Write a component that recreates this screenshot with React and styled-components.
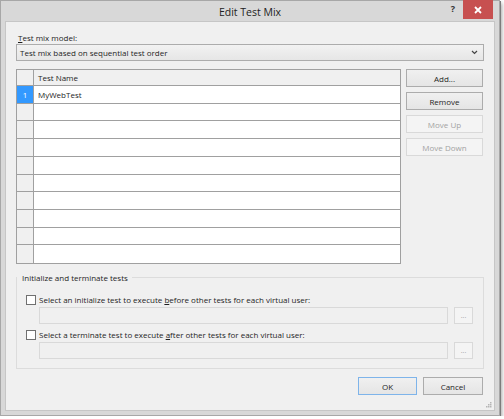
import React from 'react';
import styled, { createGlobalStyle } from 'styled-components';

const GlobalStyle = createGlobalStyle`
  html, body {
    margin: 0;
    padding: 0;
    background: #ffffff;
  }
  body {
    font-family: "Open Sans", "Noto Sans", sans-serif;
    font-size: 8px;
    color: #1e1e1e;
  }
`;

const Window = styled.div`
  width: 500px;
  box-sizing: border-box;
  background: #d8d8d8;
  border: 1px solid #a7a7a7;
  padding: 0 4px 4px 4px;
  box-shadow: 1px 1px 0 #7c7c7c, 2px 3px 4px rgba(0, 0, 0, 0.35);
`;

const TitleBar = styled.div`
  height: 20px;
  display: grid;
  grid-template-columns: 1fr auto 1fr;
  align-items: start;
`;

const Title = styled.div`
  grid-column: 2;
  font-size: 10.5px;
  line-height: 22px;
  color: #222;
`;

const Controls = styled.div`
  grid-column: 3;
  justify-self: end;
  display: flex;
  align-items: flex-start;
  margin-top: -1px;
  margin-right: 2px;
`;

const HelpButton = styled.div`
  width: 16px;
  font-size: 9px;
  font-weight: bold;
  line-height: 18px;
  text-align: center;
  color: #333;
  margin-right: 2px;
`;

const CloseButton = styled.div`
  width: 30px;
  height: 19px;
  background: #c75050;
  display: flex;
  align-items: center;
  justify-content: center;
`;

const Client = styled.div`
  position: relative;
  background: #f0f0f0;
  border: 1px solid #c6c6c6;
  padding: 10px 10px 15px 10px;
`;

const FieldLabel = styled.div`
  line-height: 11px;
  padding-left: 2px;
  margin-bottom: 1px;
`;

const Combo = styled.div`
  height: 17px;
  box-sizing: border-box;
  border: 1px solid #acacac;
  background: linear-gradient(#f2f2f2, #e6e6e6);
  display: flex;
  align-items: center;
  justify-content: space-between;
  padding: 0 5px 0 3px;
`;

const MainRow = styled.div`
  display: flex;
  gap: 5px;
  margin-top: 8px;
`;

const Grid = styled.div`
  width: 385px;
  height: 195px;
  box-sizing: border-box;
  border: 1px solid #a0a0a0;
  display: grid;
  grid-template-columns: 17px 1fr;
  grid-template-rows: 16px repeat(10, 1fr);
  background: #ffffff;
`;

const Cell = styled.div`
  border-right: ${({ $last }) => ($last ? 'none' : '1px solid #a0a0a0')};
  border-bottom: ${({ $bottom }) => ($bottom ? 'none' : '1px solid #a0a0a0')};
  background: ${({ $head, $selected }) =>
    $selected ? '#3399ff' : $head ? '#f0f0f0' : '#ffffff'};
  color: ${({ $selected }) => ($selected ? '#ffffff' : '#1e1e1e')};
  display: flex;
  align-items: center;
  justify-content: ${({ $num }) => ($num ? 'center' : 'flex-start')};
  padding-left: ${({ $num }) => ($num ? '0' : '4px')};
  white-space: nowrap;
  overflow: hidden;
`;

const ButtonColumn = styled.div`
  width: 77px;
  display: flex;
  flex-direction: column;
  gap: 5px;
`;

const Button = styled.div`
  height: 18px;
  box-sizing: border-box;
  width: ${({ $w }) => $w || '77px'};
  border: 1px solid
    ${({ $disabled, $default }) =>
      $disabled ? '#d9d9d9' : $default ? '#7eb4ea' : '#acacac'};
  background: ${({ $disabled }) =>
    $disabled ? '#f4f4f4' : 'linear-gradient(#f0f0f0, #e5e5e5)'};
  color: ${({ $disabled }) => ($disabled ? '#a3a3a3' : '#1e1e1e')};
  display: flex;
  align-items: center;
  justify-content: center;
`;

const Group = styled.fieldset`
  margin: 8px 0 0 0;
  padding: 11px 10px 9px 9px;
  border: 1px solid #dcdcdc;
  min-width: 0;
`;

const Legend = styled.legend`
  padding: 0 4px 0 5px;
  margin-left: -9px;
  line-height: 11px;
`;

const CheckRow = styled.label`
  display: flex;
  align-items: center;
  gap: 3px;
  line-height: 11px;
  margin-top: ${({ $first }) => ($first ? '0' : '5px')};
`;

const Box = styled.span`
  width: 10px;
  height: 10px;
  box-sizing: border-box;
  border: 1px solid #707070;
  background: #ffffff;
  flex: none;
`;

const PickRow = styled.div`
  display: flex;
  gap: 6px;
  padding-left: 13px;
  margin-top: 2px;
`;

const TextField = styled.div`
  width: 409px;
  height: 17px;
  box-sizing: border-box;
  border: 1px solid #d9d9d9;
  background: #f0f0f0;
`;

const DotsButton = styled.div`
  width: 19px;
  height: 17px;
  box-sizing: border-box;
  border: 1px solid #d9d9d9;
  background: #f4f4f4;
  color: #a3a3a3;
  font-size: 7px;
  display: flex;
  align-items: center;
  justify-content: center;
`;

const Footer = styled.div`
  display: flex;
  justify-content: flex-end;
  gap: 6px;
  margin-top: 8px;
  padding-right: 1px;
`;

const Grip = styled.svg`
  position: absolute;
  right: 2px;
  bottom: 2px;
`;

const U = styled.span`
  text-decoration: underline;
`;

const rows = ['MyWebTest', '', '', '', '', '', '', '', '', ''];

export default function App() {
  return (
    <>
      <GlobalStyle />
      <Window>
        <TitleBar>
          <Title>Edit Test Mix</Title>
          <Controls>
            <HelpButton>?</HelpButton>
            <CloseButton>
              <svg width="8" height="8" viewBox="0 0 8 8">
                <path d="M1 1 L7 7 M7 1 L1 7" stroke="#fff" strokeWidth="1.8" />
              </svg>
            </CloseButton>
          </Controls>
        </TitleBar>

        <Client>
          <FieldLabel>
            <U>T</U>est mix model:
          </FieldLabel>
          <Combo>
            <span>Test mix based on sequential test order</span>
            <svg width="7" height="5" viewBox="0 0 7 5">
              <path d="M1 1 L3.5 3.5 L6 1" stroke="#444" strokeWidth="1.2" fill="none" />
            </svg>
          </Combo>

          <MainRow>
            <Grid>
              <Cell $head />
              <Cell $head $last>Test Name</Cell>
              {rows.map((name, i) => (
                <React.Fragment key={i}>
                  <Cell $head $num $selected={i === 0} $bottom={i === rows.length - 1}>
                    {i === 0 ? '1' : ''}
                  </Cell>
                  <Cell $last $bottom={i === rows.length - 1}>{name}</Cell>
                </React.Fragment>
              ))}
            </Grid>
            <ButtonColumn>
              <Button>Add...</Button>
              <Button>Remove</Button>
              <Button $disabled>Move Up</Button>
              <Button $disabled>Move Down</Button>
            </ButtonColumn>
          </MainRow>

          <Group>
            <Legend>Initialize and terminate tests</Legend>
            <CheckRow $first>
              <Box />
              <span>
                Select an initialize test to execute <U>b</U>efore other tests for each virtual user:
              </span>
            </CheckRow>
            <PickRow>
              <TextField />
              <DotsButton>...</DotsButton>
            </PickRow>
            <CheckRow>
              <Box />
              <span>
                Select a terminate test to execute <U>a</U>fter other tests for each virtual user:
              </span>
            </CheckRow>
            <PickRow>
              <TextField />
              <DotsButton>...</DotsButton>
            </PickRow>
          </Group>

          <Footer>
            <Button $default $w="59px">OK</Button>
            <Button $w="60px">Cancel</Button>
          </Footer>

          <Grip width="7" height="7" viewBox="0 0 7 7">
            <rect x="5" y="1" width="1.5" height="1.5" fill="#b5b5b5" />
            <rect x="3" y="3" width="1.5" height="1.5" fill="#b5b5b5" />
            <rect x="5" y="3" width="1.5" height="1.5" fill="#b5b5b5" />
            <rect x="1" y="5" width="1.5" height="1.5" fill="#b5b5b5" />
            <rect x="3" y="5" width="1.5" height="1.5" fill="#b5b5b5" />
            <rect x="5" y="5" width="1.5" height="1.5" fill="#b5b5b5" />
          </Grip>
        </Client>
      </Window>
    </>
  );
}
